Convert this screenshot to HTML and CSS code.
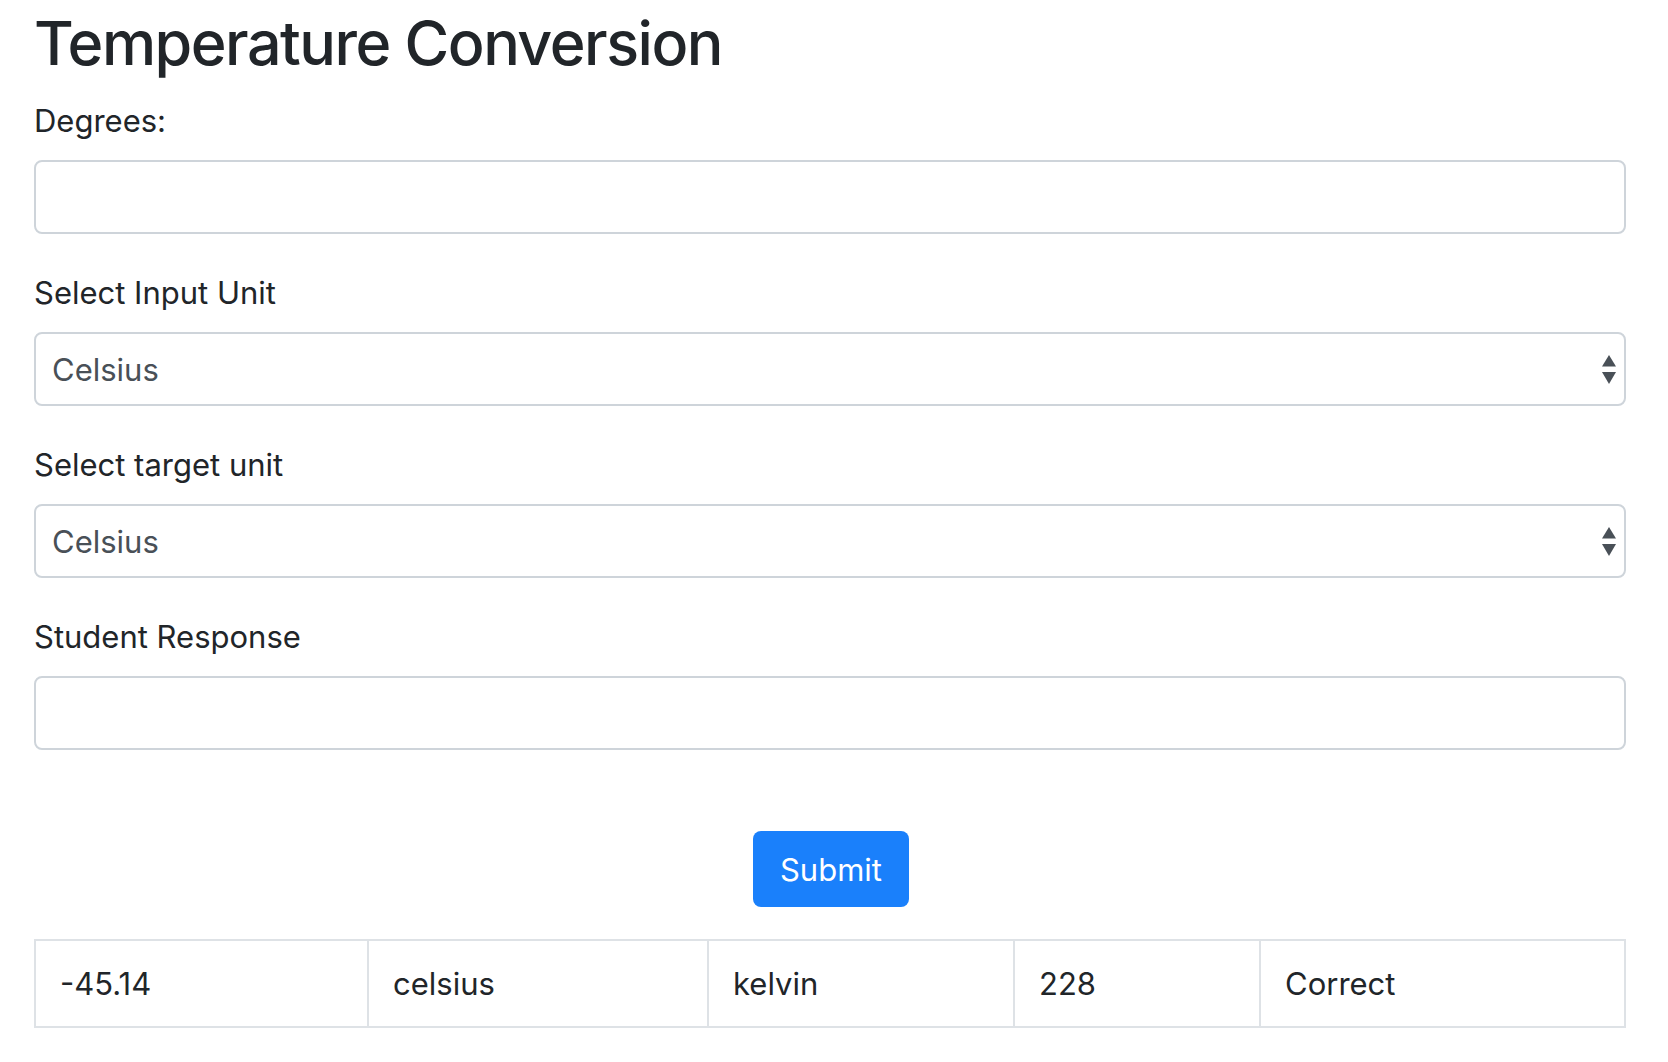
FILE: index.html
```html
<!DOCTYPE html>
<html lang="en">
<head>
<meta charset="utf-8">
<title>Temperature Conversion</title>
<link rel="stylesheet" href="styles.css">
</head>
<body>
<main class="page">
  <h1 class="title">Temperature Conversion</h1>
  <form class="form">
    <div class="group">
      <label class="label" for="degrees">Degrees:</label>
      <input class="control" id="degrees" type="text">
    </div>
    <div class="group">
      <label class="label" for="input-unit">Select Input Unit</label>
      <div class="select-wrap">
        <select class="control select" id="input-unit">
          <option>Celsius</option>
          <option>Fahrenheit</option>
          <option>Kelvin</option>
          <option>Rankine</option>
        </select>
        <svg class="select-arrows" width="14" height="29" viewBox="0 0 14 29" aria-hidden="true">
          <path d="M7 0 L14 11.5 L0 11.5 Z" fill="#495057"/>
          <path d="M0 17 L14 17 L7 29 Z" fill="#495057"/>
        </svg>
      </div>
    </div>
    <div class="group">
      <label class="label" for="target-unit">Select target unit</label>
      <div class="select-wrap">
        <select class="control select" id="target-unit">
          <option>Celsius</option>
          <option>Fahrenheit</option>
          <option>Kelvin</option>
          <option>Rankine</option>
        </select>
        <svg class="select-arrows" width="14" height="29" viewBox="0 0 14 29" aria-hidden="true">
          <path d="M7 0 L14 11.5 L0 11.5 Z" fill="#495057"/>
          <path d="M0 17 L14 17 L7 29 Z" fill="#495057"/>
        </svg>
      </div>
    </div>
    <div class="group">
      <label class="label" for="response">Student Response</label>
      <input class="control" id="response" type="text">
    </div>
    <div class="actions">
      <button class="btn" type="button">Submit</button>
    </div>
  </form>
  <table class="results">
    <tbody>
      <tr>
        <td class="c1">-45.14</td>
        <td class="c2">celsius</td>
        <td class="c3">kelvin</td>
        <td class="c4">228</td>
        <td class="c5">Correct</td>
      </tr>
    </tbody>
  </table>
</main>
</body>
</html>
```

FILE: styles.css
```css
* { box-sizing: border-box; }

html, body {
  margin: 0;
  padding: 0;
  background: #ffffff;
}

body {
  font-family: "Inter", "Liberation Sans", sans-serif;
  color: #212529;
}

.page {
  padding: 0 42px 0 34px;
}

.title {
  margin: 6px 0 14px;
  font-size: 61px;
  line-height: 74px;
  font-weight: 500;
  letter-spacing: -1.5px;
  color: #212529;
}

.form {
  display: flex;
  flex-direction: column;
}

.group {
  display: flex;
  flex-direction: column;
  margin-bottom: 32px;
}

.label {
  display: block;
  font-size: 31px;
  line-height: 48px;
  padding-top: 3px;
  margin-bottom: 15px;
  color: #212529;
}

.control {
  display: block;
  width: 100%;
  height: 74px;
  padding: 0 16px;
  font-family: inherit;
  font-size: 31px;
  color: #495057;
  background: #ffffff;
  border: 2px solid #ced4da;
  border-radius: 8px;
  outline: none;
}

.select-wrap {
  position: relative;
}

.select {
  appearance: none;
  -webkit-appearance: none;
}

.select-arrows {
  position: absolute;
  right: 10px;
  top: 23px;
  pointer-events: none;
}

.actions {
  display: flex;
  justify-content: center;
  padding-top: 49px;
}

.btn {
  width: 156px;
  height: 76px;
  margin-left: 2px;
  font-family: inherit;
  font-size: 31px;
  color: #ffffff;
  background: #1a80fb;
  border: none;
  border-radius: 8px;
}

.results {
  width: 100%;
  margin-top: 32px;
  border-collapse: collapse;
  table-layout: fixed;
}

.results td {
  border: 2px solid #dee2e6;
  padding: 22px 24px 21px;
  font-size: 31px;
  line-height: 42px;
  color: #212529;
}

.results .c1 { width: 333px; }
.results .c2 { width: 340px; }
.results .c3 { width: 306px; }
.results .c4 { width: 246px; }
```
